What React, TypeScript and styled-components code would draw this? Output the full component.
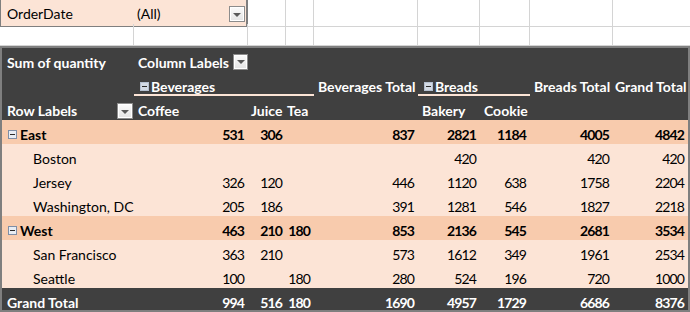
import React from "react";
import styled, { createGlobalStyle } from "styled-components";

const COLS = "132px 114px 38px 28px 104px 62px 50px 83px 75px";
const SHEET_COLS = "134px 114px 38px 28px 104px 62px 50px 83px 77px";

const DARK = "#404040";
const PEACH = "#f8cbad";
const PEACH_LIGHT = "#fce4d6";
const GRID = "#d4d4d4";
const EDGE = "#7f7f7f";

const GlobalStyle = createGlobalStyle`
  html, body {
    margin: 0;
    padding: 0;
    background: #ffffff;
  }
  body {
    font-family: Lato, "Open Sans", sans-serif;
    font-size: 14px;
    color: #000;
  }
`;

const Page = styled.div`
  width: 690px;
  height: 312px;
  overflow: hidden;
`;

const SheetRow = styled.div<{ h: number }>`
  display: grid;
  grid-template-columns: ${SHEET_COLS};
  height: ${({ h }) => h}px;
`;

const SheetCell = styled.div<{ last?: boolean }>`
  box-sizing: border-box;
  border-right: ${({ last }) => (last ? "none" : `1px solid ${GRID}`)};
  border-bottom: 1px solid ${GRID};
`;

const FilterCell = styled.div`
  grid-column: 1 / 3;
  box-sizing: border-box;
  background: ${PEACH_LIGHT};
  border-left: 1px solid ${EDGE};
  border-right: 2px solid ${EDGE};
  border-bottom: 1px solid ${EDGE};
  display: grid;
  grid-template-columns: 129px 1fr 17px;
  align-items: start;
  line-height: 24px;
  padding-top: 2px;
`;

const FilterText = styled.span<{ pad: number }>`
  padding-left: ${({ pad }) => pad}px;
  white-space: nowrap;
`;

const Pivot = styled.div`
  border: 2px solid ${EDGE};
  background: ${PEACH_LIGHT};
`;

const Row = styled.div<{ tone: "dark" | "group" | "item"; h?: number }>`
  display: grid;
  grid-template-columns: ${COLS};
  height: ${({ h }) => h ?? 24}px;
  background: ${({ tone }) =>
    tone === "dark" ? DARK : tone === "group" ? PEACH : PEACH_LIGHT};
  color: ${({ tone }) => (tone === "dark" ? "#ffffff" : "#000000")};
  font-weight: ${({ tone }) => (tone === "item" ? 400 : 700)};
`;

const Cell = styled.div<{ num?: boolean; indent?: number; span?: number }>`
  box-sizing: border-box;
  position: relative;
  grid-column: ${({ span }) => (span ? `span ${span}` : "auto")};
  display: flex;
  align-items: center;
  justify-content: ${({ num }) => (num ? "flex-end" : "flex-start")};
  padding: 5px ${({ num }) => (num ? 4 : 0)}px 0 ${({ indent }) => indent ?? 4}px;
  line-height: 19px;
  height: 100%;
  white-space: nowrap;
  letter-spacing: ${({ num }) => (num ? "-0.9px" : "0")};
`;

const GroupHeader = styled(Cell)`
  &::after {
    content: "";
    position: absolute;
    left: 0;
    right: 0;
    bottom: 0;
    height: 2px;
    background: ${PEACH_LIGHT};
  }
`;

const DropButton = styled.span<{ top?: number }>`
  position: absolute;
  right: 1px;
  top: ${({ top }) => top ?? 6}px;
  width: 16px;
  height: 16px;
  box-sizing: border-box;
  border: 1px solid #8c8c8c;
  background: linear-gradient(#fbfbfb, #e4e4e4);
  box-shadow: inset 0 0 0 1px #ffffff;
  display: flex;
  align-items: center;
  justify-content: center;

  &::before {
    content: "";
    border-left: 4px solid transparent;
    border-right: 4px solid transparent;
    border-top: 4px solid #595959;
    margin-top: 1px;
  }
`;

const InlineDrop = styled(DropButton)`
  position: static;
  margin-left: 4px;
  margin-top: -2px;
`;

const FilterDrop = styled(DropButton)`
  position: static;
  margin-top: 4px;
`;

const Toggle = styled.span<{ onDark?: boolean }>`
  display: inline-flex;
  align-items: center;
  justify-content: center;
  flex: none;
  width: 9px;
  height: 9px;
  box-sizing: border-box;
  border: 1px solid ${({ onDark }) => (onDark ? "#b4bfcf" : "#7f8ea6")};
  background: ${({ onDark }) => (onDark ? "#d3dae4" : "#e8edf4")};
  margin-right: ${({ onDark }) => (onDark ? 2 : 3)}px;
  margin-top: -1px;

  &::before {
    content: "";
    width: 5px;
    height: 1px;
    background: #2b2b2b;
  }
`;

type Val = number | "";

interface DataRow {
  label: string;
  tone: "group" | "item" | "dark";
  values: Val[];
}

const rows: DataRow[] = [
  { label: "East", tone: "group", values: [531, 306, "", 837, 2821, 1184, 4005, 4842] },
  { label: "Boston", tone: "item", values: ["", "", "", "", 420, "", 420, 420] },
  { label: "Jersey", tone: "item", values: [326, 120, "", 446, 1120, 638, 1758, 2204] },
  { label: "Washington, DC", tone: "item", values: [205, 186, "", 391, 1281, 546, 1827, 2218] },
  { label: "West", tone: "group", values: [463, 210, 180, 853, 2136, 545, 2681, 3534] },
  { label: "San Francisco", tone: "item", values: [363, 210, "", 573, 1612, 349, 1961, 2534] },
  { label: "Seattle", tone: "item", values: [100, "", 180, 280, 524, 196, 720, 1000] },
  { label: "Grand Total", tone: "dark", values: [994, 516, 180, 1690, 4957, 1729, 6686, 8376] },
];

const sheetFill = [2, 3, 4, 5, 6, 7, 8];

const App: React.FC = () => {
  return (
    <Page>
      <GlobalStyle />
      <SheetRow h={24}>
        <FilterCell>
          <FilterText pad={6}>OrderDate</FilterText>
          <FilterText pad={7}>(All)</FilterText>
          <FilterDrop />
        </FilterCell>
        {sheetFill.map((c) => (
          <SheetCell key={c} last={c === 8} />
        ))}
      </SheetRow>
      <SheetRow h={22}>
        {[0, 1, ...sheetFill].map((c) => (
          <SheetCell key={c} last={c === 8} />
        ))}
      </SheetRow>

      <Pivot>
        <Row tone="dark">
          <Cell indent={5}>Sum of quantity</Cell>
          <Cell>
            Column Labels
            <InlineDrop />
          </Cell>
          <Cell span={7} />
        </Row>
        <Row tone="dark">
          <Cell />
          <GroupHeader span={3} indent={6}>
            <Toggle onDark />
            Beverages
          </GroupHeader>
          <Cell>Beverages Total</Cell>
          <GroupHeader span={2} indent={6}>
            <Toggle onDark />
            Breads
          </GroupHeader>
          <Cell>Breads Total</Cell>
          <Cell indent={2}>Grand Total</Cell>
        </Row>
        <Row tone="dark">
          <Cell indent={5}>
            Row Labels
            <DropButton top={7} />
          </Cell>
          <Cell>Coffee</Cell>
          <Cell indent={3}>Juice</Cell>
          <Cell indent={1}>Tea</Cell>
          <Cell />
          <Cell>Bakery</Cell>
          <Cell>Cookie</Cell>
          <Cell />
          <Cell />
        </Row>
        {rows.map((r) => (
          <Row key={r.label} tone={r.tone} h={r.tone === "dark" ? 22 : 24}>
            <Cell indent={r.tone === "item" ? 31 : r.tone === "group" ? 6 : 5}>
              {r.tone === "group" && <Toggle />}
              {r.label}
            </Cell>
            {r.values.map((v, i) => (
              <Cell key={i} num>
                {v}
              </Cell>
            ))}
          </Row>
        ))}
      </Pivot>
    </Page>
  );
};

export default App;
